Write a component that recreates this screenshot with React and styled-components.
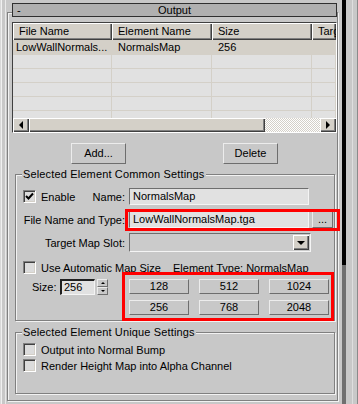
import React from "react";
import styled, { createGlobalStyle } from "styled-components";

const GlobalStyle = createGlobalStyle`
  html, body { margin: 0; padding: 0; background: #c8c8c8; }
  body {
    font-family: "Liberation Sans", Arial, sans-serif;
    font-size: 11px;
    color: #000;
  }
  * { box-sizing: border-box; }
`;

const Page = styled.div`
  display: flex;
  width: 358px;
  height: 404px;
  overflow: hidden;
  background: #c8c8c8;
`;

const LeftGutter = styled.div`
  flex: none;
  width: 7px;
  background: linear-gradient(
    to right,
    #d8d8d8 0 1px,
    #f0f0f0 1px 2px,
    #c8c8c8 2px 5px,
    #e8e8e8 5px 6px,
    #c8c8c8 6px
  );
`;

const Rollout = styled.div`
  flex: none;
  width: 333px;
  padding-top: 12px;
`;

const Frame = styled.div`
  width: 331px;
  height: 389px;
  border: 1px solid #808080;
  box-shadow: inset 1px 1px 0 #f2f2f2, 1px 1px 0 #f2f2f2;
  display: flex;
  flex-direction: column;
`;

const TitleBar = styled.div`
  margin: -10px 0 0 4px;
  width: 325px;
  height: 14px;
  background: #b0b0b0;
  border: 1px solid #303030;
  display: grid;
  grid-template-columns: 1fr auto 1fr;
  align-items: center;
  line-height: 12px;
  padding: 0 4px;
`;

const Collapse = styled.span`
  justify-self: start;
`;

const Table = styled.div`
  margin: 5px 0 0 4px;
  width: 325px;
  height: 111px;
  border: 1px solid;
  border-color: #404040 #ffffff #ffffff #404040;
  display: flex;
  flex-direction: column;
  background: #e1e1e1;
`;

const cols = "99px 100px 100px 1fr";

const HeaderRow = styled.div`
  display: grid;
  grid-template-columns: ${cols};
  height: 17px;
  flex: none;
`;

const HeaderCell = styled.div`
  background: #d4d0c8;
  box-shadow: inset 1px 1px 0 #ffffff, inset -1px -1px 0 #404040,
    inset -2px -2px 0 #808080;
  padding: 0 0 0 6px;
  line-height: 16px;
  white-space: nowrap;
  overflow: hidden;
`;

const Body = styled.div`
  flex: 1;
  overflow: hidden;
`;

const Row = styled.div`
  display: grid;
  grid-template-columns: ${cols};
  height: ${(p) => (p.$first ? 15 : 14)}px;
  background: ${(p) => (p.$selected ? "#d4d0c8" : "#e1e1e1")};
  border-bottom: 1px solid #d4d0c8;
`;

const Cell = styled.div`
  border-right: 1px solid #d4d0c8;
  padding-left: ${(p) => (p.$pad ? p.$pad : 3)}px;
  line-height: 14px;
  white-space: nowrap;
  overflow: hidden;
`;

const HScroll = styled.div`
  flex: none;
  height: 14px;
  display: flex;
`;

const ArrowBtn = styled.div`
  flex: none;
  width: 16px;
  height: 14px;
  background: #d4d0c8;
  box-shadow: inset 1px 1px 0 #ffffff, inset -1px -1px 0 #404040,
    inset -2px -2px 0 #808080;
  display: flex;
  align-items: center;
  justify-content: center;
`;

const Thumb = styled.div`
  flex: none;
  width: 236px;
  background: #d4d0c8;
  box-shadow: inset 1px 1px 0 #ffffff, inset -1px -1px 0 #404040,
    inset -2px -2px 0 #808080;
`;

const Track = styled.div`
  flex: 1;
  background-color: #ffffff;
  background-image: conic-gradient(
    #d4d0c8 25%,
    #ffffff 0 50%,
    #d4d0c8 0 75%,
    #ffffff 0
  );
  background-size: 2px 2px;
`;

const ButtonRow = styled.div`
  display: flex;
  gap: 97px;
  padding-left: 63px;
  margin-top: 10px;
`;

const Button = styled.button`
  font: inherit;
  color: #000;
  width: ${(p) => p.$w || 55}px;
  height: ${(p) => p.$h || 21}px;
  padding: 0;
  margin: 0 0 0 ${(p) => p.$ml || 0}px;
  background: #c8c8c8;
  border: 1px solid;
  border-color: #ececec #6e6e6e #6e6e6e #ececec;
  line-height: 1;
`;

const Group = styled.div`
  margin: ${(p) => p.$top}px 0 0 7px;
  width: 320px;
  height: ${(p) => p.$h}px;
  border: 1px solid #808080;
  box-shadow: inset 1px 1px 0 #f2f2f2, 1px 1px 0 #f2f2f2;
  display: flex;
  flex-direction: column;
  flex: none;
`;

const Legend = styled.span`
  align-self: flex-start;
  margin: -7px 0 0 6px;
  padding: 0 1px;
  height: 13px;
  line-height: 13px;
  background: #c8c8c8;
  letter-spacing: 0.15px;
`;

const FormRow = styled.div`
  position: relative;
  display: flex;
  align-items: ${(p) => p.$align || "center"};
  margin-top: ${(p) => p.$top}px;
  height: ${(p) => p.$h}px;
`;

const LabelCell = styled.div`
  flex: none;
  width: 109px;
  margin-right: 4px;
  display: flex;
  align-items: center;
  justify-content: ${(p) => p.$justify || "flex-end"};
  padding-left: ${(p) => p.$pl || 0}px;
  white-space: nowrap;
`;

const Inline = styled.div`
  display: flex;
  align-items: center;
  gap: 5px;
`;

const TextField = styled.div`
  width: ${(p) => p.$w}px;
  height: 17px;
  background: #e1e1e1;
  border: 1px solid;
  border-color: #6e6e6e #f4f4f4 #f4f4f4 #6e6e6e;
  padding-left: 3px;
  line-height: 15px;
  white-space: nowrap;
  overflow: hidden;
`;

const Combo = styled.div`
  width: 182px;
  height: 19px;
  background: #cbcbcb;
  border: 1px solid;
  border-color: #6e6e6e #f4f4f4 #f4f4f4 #6e6e6e;
  display: flex;
  justify-content: flex-end;
  padding: 1px;
`;

const DropBtn = styled.div`
  width: 16px;
  height: 15px;
  background: #d4d0c8;
  box-shadow: inset 1px 1px 0 #ffffff, inset -1px -1px 0 #404040,
    inset -2px -2px 0 #808080;
  display: flex;
  align-items: center;
  justify-content: center;
`;

const Box = styled.span`
  flex: none;
  width: 13px;
  height: 13px;
  background: #dcdcdc;
  border: 1px solid;
  border-color: #808080 #ffffff #ffffff #808080;
  box-shadow: inset 1px 1px 0 #404040, inset -1px -1px 0 #d4d0c8;
  display: flex;
  align-items: center;
  justify-content: center;
`;

const CheckRow = styled.div`
  flex: none;
  display: flex;
  align-items: center;
  gap: 5px;
  width: ${(p) => (p.$w ? `${p.$w}px` : "auto")};
  margin-left: ${(p) => p.$ml || 7}px;
  margin-top: ${(p) => p.$top || 0}px;
  height: 13px;
  white-space: nowrap;
`;

const ElementType = styled.span`
  white-space: nowrap;
`;

const SizeCell = styled.div`
  flex: none;
  width: 109px;
  margin-right: 4px;
  padding-left: 16px;
  display: flex;
  align-items: flex-start;
`;

const SizeLabel = styled.span`
  width: 28px;
  line-height: 16px;
`;

const SpinField = styled.div`
  width: 35px;
  height: 16px;
  background: #e1e1e1;
  border-top: 2px solid #202020;
  border-left: 2px solid #202020;
  border-right: 1px solid #f4f4f4;
  border-bottom: 1px solid #f4f4f4;
  padding-left: 2px;
  line-height: 13px;
`;

const Spinner = styled.div`
  margin-left: 2px;
  width: 11px;
  height: 16px;
  display: flex;
  flex-direction: column;
`;

const SpinHalf = styled.div`
  flex: 1;
  background: #c8c8c8;
  border: 1px solid;
  border-color: #ececec #6e6e6e #6e6e6e #ececec;
  display: flex;
  align-items: center;
  justify-content: center;
`;

const SizeGrid = styled.div`
  display: grid;
  grid-template-columns: repeat(3, 60px);
  grid-auto-rows: 15px;
  column-gap: 10px;
  row-gap: 6px;
`;

const Highlight = styled.div`
  position: absolute;
  left: ${(p) => p.$x}px;
  top: ${(p) => p.$y}px;
  width: ${(p) => p.$w}px;
  height: ${(p) => p.$h}px;
  border: 3px solid #ff0000;
  pointer-events: none;
`;

const RightStrip = styled.div`
  flex: none;
  width: 18px;
  background: linear-gradient(
    to right,
    #c8c8c8 0 2px,
    transparent 2px 6px,
    #c8c8c8 6px 12px,
    #dedede 12px 13px,
    #c8c8c8 13px 17px,
    #8a8a8a 17px
  ),
  linear-gradient(to bottom, #000000 0 265px, #6f6f6f 265px);
`;

const Tri = ({ dir, size = 4 }) => {
  const s = size;
  const pts = {
    left: `${s},0 ${s},${s * 2} 0,${s}`,
    right: `0,0 0,${s * 2} ${s},${s}`,
    down: `0,0 ${s * 2},0 ${s},${s}`,
    up: `0,${s} ${s * 2},${s} ${s},0`,
  }[dir];
  const horiz = dir === "left" || dir === "right";
  return (
    <svg
      width={horiz ? s : s * 2}
      height={horiz ? s * 2 : s}
      viewBox={`0 0 ${horiz ? s : s * 2} ${horiz ? s * 2 : s}`}
    >
      <polygon points={pts} fill="#000" />
    </svg>
  );
};

const Checkbox = ({ checked }) => (
  <Box>
    {checked && (
      <svg width="9" height="9" viewBox="0 0 9 9">
        <polyline
          points="1,4 3.5,6.5 8,1.5"
          fill="none"
          stroke="#000"
          strokeWidth="2"
        />
      </svg>
    )}
  </Box>
);

const emptyRows = [0, 1, 2, 3, 4];

export default function App() {
  return (
    <>
      <GlobalStyle />
      <Page>
        <LeftGutter />
        <Rollout>
          <Frame>
            <TitleBar>
              <Collapse>-</Collapse>
              <span>Output</span>
              <span />
            </TitleBar>

            <Table>
              <HeaderRow>
                <HeaderCell>File Name</HeaderCell>
                <HeaderCell>Element Name</HeaderCell>
                <HeaderCell>Size</HeaderCell>
                <HeaderCell>Target</HeaderCell>
              </HeaderRow>
              <Body>
                <Row $selected $first>
                  <Cell>LowWallNormals...</Cell>
                  <Cell $pad={6}>NormalsMap</Cell>
                  <Cell $pad={6}>256</Cell>
                  <Cell />
                </Row>
                {emptyRows.map((i) => (
                  <Row key={i}>
                    <Cell />
                    <Cell />
                    <Cell />
                    <Cell />
                  </Row>
                ))}
              </Body>
              <HScroll>
                <ArrowBtn>
                  <Tri dir="left" />
                </ArrowBtn>
                <Thumb />
                <Track />
                <ArrowBtn>
                  <Tri dir="right" />
                </ArrowBtn>
              </HScroll>
            </Table>

            <ButtonRow>
              <Button>Add...</Button>
              <Button>Delete</Button>
            </ButtonRow>

            <Group $top={10} $h={147}>
              <Legend>Selected Element Common Settings</Legend>

              <FormRow $top={7} $h={17}>
                <LabelCell $justify="space-between" $pl={7}>
                  <Inline>
                    <Checkbox checked />
                    <span>Enable</span>
                  </Inline>
                  <span>Name:</span>
                </LabelCell>
                <TextField $w={180}>NormalsMap</TextField>
              </FormRow>

              <FormRow $top={6} $h={17}>
                <LabelCell>File Name and Type:</LabelCell>
                <TextField $w={180}>LowWallNormalsMap.tga</TextField>
                <Button $w={21} $h={17} $ml={3}>
                  ...
                </Button>
                <Highlight $x={109} $y={-2} $w={215} $h={22} />
              </FormRow>

              <FormRow $top={5} $h={19}>
                <LabelCell>Target Map Slot:</LabelCell>
                <Combo>
                  <DropBtn>
                    <Tri dir="down" />
                  </DropBtn>
                </Combo>
              </FormRow>

              <FormRow $top={9} $h={13}>
                <CheckRow $w={150}>
                  <Checkbox />
                  <span>Use Automatic Map Size</span>
                </CheckRow>
                <ElementType>Element Type: NormalsMap</ElementType>
              </FormRow>

              <FormRow $top={5} $h={36} $align="flex-start">
                <SizeCell>
                  <SizeLabel>Size:</SizeLabel>
                  <SpinField>256</SpinField>
                  <Spinner>
                    <SpinHalf>
                      <Tri dir="up" size={2} />
                    </SpinHalf>
                    <SpinHalf>
                      <Tri dir="down" size={2} />
                    </SpinHalf>
                  </Spinner>
                </SizeCell>
                <SizeGrid>
                  {["128", "512", "1024", "256", "768", "2048"].map((v) => (
                    <Button key={v} $w={60} $h={15}>
                      {v}
                    </Button>
                  ))}
                </SizeGrid>
                <Highlight $x={106} $y={-7} $w={212} $h={49} />
              </FormRow>
            </Group>

            <Group $top={11} $h={62}>
              <Legend>Selected Element Unique Settings</Legend>
              <CheckRow $top={4}>
                <Checkbox />
                <span>Output into Normal Bump</span>
              </CheckRow>
              <CheckRow $top={3}>
                <Checkbox />
                <span>Render Height Map into Alpha Channel</span>
              </CheckRow>
            </Group>
          </Frame>
        </Rollout>
        <RightStrip />
      </Page>
    </>
  );
}
